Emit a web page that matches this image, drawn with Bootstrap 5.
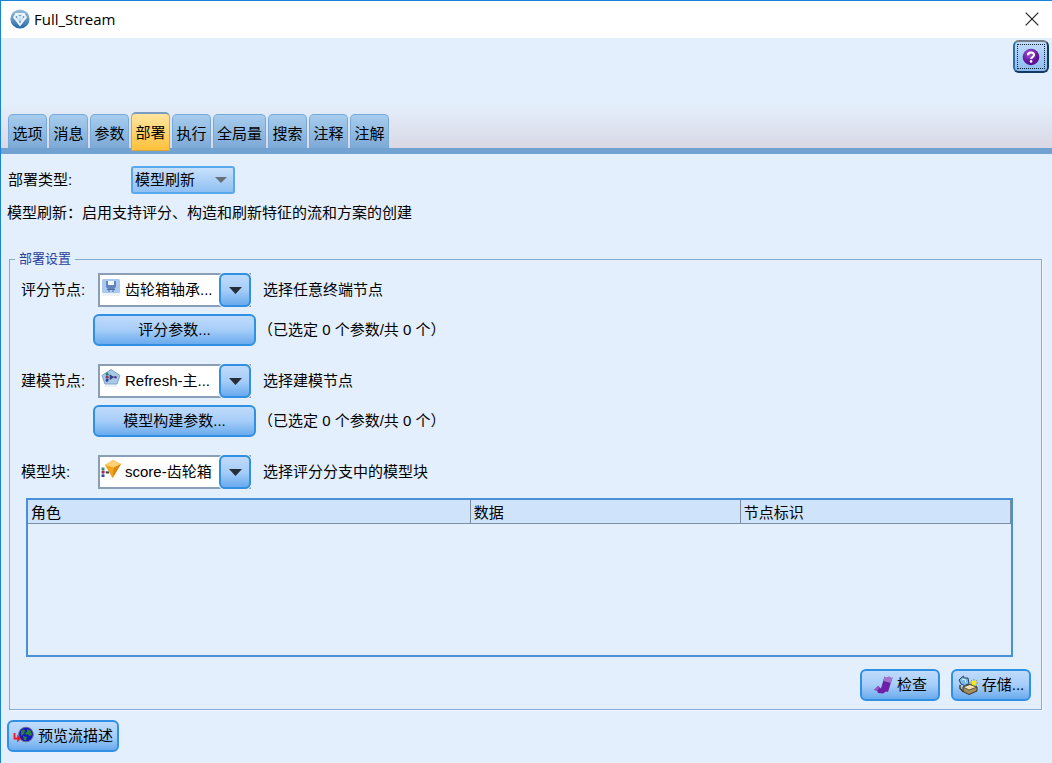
<!DOCTYPE html>
<html lang="zh-CN">
<head>
<meta charset="utf-8">
<meta name="viewport" content="width=device-width, initial-scale=1">
<title>Full_Stream</title>
<link href="https://cdn.jsdelivr.net/npm/bootstrap@5.3.0/dist/css/bootstrap.min.css" rel="stylesheet">
<style>
  body { font-family: "Liberation Sans", "Noto Sans CJK SC", sans-serif; font-size: 15px; line-height: 20px; color: #000; background: #e3effc; }
  .dialog { border: 1px solid #1883d7; border-right: 0; border-bottom: 0; }
  .title-bar { height: 37px; padding: 0 13px 2px 9px; background: #fff; font-family: "Open Sans", "Noto Sans CJK SC", sans-serif; }
  .close-btn { padding: 0; border: 0; background: none; line-height: 0; }
  .head { min-height: 116px; padding-left: 7px; border-bottom: 6px solid #72a2d2; background: linear-gradient(#e3effc 60%, #dad8e5) padding-box; }
  .help-btn { width: 36px; height: 33px; margin: 2px 3px 0 0; padding: 2px; border: 2px solid #15385f; border-top-color: #737d88; border-left-color: #2d6ea8; border-radius: 6px; background: linear-gradient(#c2dcfa, #8bbcf0); }
  .help-btn span { display: flex; width: 100%; height: 100%; align-items: center; justify-content: center; border: 1px dotted #123; }
  .tabs { gap: 2px; border: 0; }
  .tabs .nav-link { min-width: 39px; height: 34px; padding: 5px 3px 0; border: 1px solid #77a9dc; border-bottom: 0; border-radius: 5px 5px 0 0; margin: 0; color: #000; background: linear-gradient(#a7cdee, #7ca9d6); }
  .tabs .nav-link.active { height: 39px; margin-bottom: -3px; padding-top: 1px; border: 1px solid #d9a63a; border-top: 2px solid #7a9cc0; color: #000; background: linear-gradient(#ffe5a0, #ffc13c); }
  .glossy { padding: 0 4px; height: 32px; font-size: 15px; line-height: 20px; color: #000; border: 2px solid #2f90e4; border-radius: 6px; background: linear-gradient(#c0dbfb, #a6cdf8 50%, #6aabee); }
  .glossy:hover { color: #000; border-color: #1672c4; }
  .w-label { width: 77px; }
  .type-row { padding: 12px 0 0 7px; }
  .type-label { width: 123px; }
  .type-note { margin: 9px 0 0; padding-left: 6px; }
  .type-pick { position: relative; width: 104px; }
  .type-pick select { width: 100%; height: 28px; padding: 0 24px 0 2px; appearance: none; border: 2px solid #58a8ee; border-radius: 3px; background: linear-gradient(#c9e0fb, #8fc0f2); color: #000; }
  .type-pick svg { position: absolute; right: 8px; top: 11px; pointer-events: none; }
  .combo { position: relative; width: 153px; height: 34px; }
  .combo select { width: 100%; height: 34px; padding: 0 34px 0 25px; appearance: none; border: 2px solid #8a9fb5; background: #fff; color: #000; }
  .combo .pic { position: absolute; left: 3px; top: 4px; pointer-events: none; }
  .combo .drop { position: absolute; right: 0; top: 0; width: 32px; height: 34px; display: flex; align-items: center; justify-content: center; pointer-events: none; border: 2px solid #2f90e4; border-radius: 6px; background: linear-gradient(#c0dbfb, #a6cdf8 50%, #6aabee); box-shadow: 0 0 0 1px #e3effc; clip-path: inset(0 0 0 0); }
  .param-row { margin: 7px 0 18px 72px; gap: 2px; }
  .param-btn { width: 163px; }
  .settings { margin: 28px 10px 0 8px; padding: 6px 28px 8px 11px; border: 1px solid #86abd2; box-shadow: 1px 1px 0 #f4f9ff; }
  .settings legend { margin: 0 0 0 -6px; padding: 0 4px; font-size: 13px; line-height: 16px; color: #2c3e9c; }
  .grid-box { min-height: 159px; margin: 9px 0 12px 5px; border: 2px solid #4a90d6; }
  .grid-box table { table-layout: fixed; }
  .grid-box th { height: 23px; padding: 3px 3px 0; line-height: 18px; font-weight: 400; background: #cfe3fb; border-right: 1px solid #7d8b9b; border-bottom: 1px solid #7f90a6; }
  .actions { gap: 11px; margin-right: -18px; }
  .actions .glossy { width: 80px; }
  .preview-btn { margin: 10px 0 10px 6px; }
</style>
</head>
<body>
<div class="dialog min-vh-100">
  <header class="title-bar d-flex align-items-center justify-content-between">
    <div class="d-flex align-items-center gap-1">
      <svg width="20" height="20" viewBox="0 0 20 20" aria-hidden="true">
        <defs><linearGradient id="orb" x1="0" y1="0" x2="0" y2="1"><stop offset="0" stop-color="#9fbfdc"/><stop offset="1" stop-color="#2569a8"/></linearGradient></defs>
        <circle cx="10" cy="10" r="9.6" fill="url(#orb)"/>
        <path d="M5.500 4 14.500 4 17 8.500 10 17.500 3 8.500Z" fill="#e9f3fb"/>
        <path d="M6.500 8.500 10 12.500 13.500 8.500M10 8v4M8 6l2 1 2-1" fill="none" stroke="#9fc0dd" stroke-width=".8"/>
        <circle cx="6.500" cy="8" r=".9" fill="#5f95c6"/><circle cx="13.500" cy="8" r=".9" fill="#5f95c6"/><circle cx="10" cy="13" r=".9" fill="#5f95c6"/><circle cx="10" cy="6.500" r=".8" fill="#5f95c6"/>
      </svg>
      <span>Full_Stream</span>
    </div>
    <button class="close-btn" type="button" aria-label="关闭">
      <svg width="14" height="14" viewBox="0 0 14 14"><path d="M.7.7l12.600 12.600M13.300.7.7 13.300" stroke="#222" stroke-width="1.200"/></svg>
    </button>
  </header>

  <div class="head d-flex flex-column justify-content-between">
    <button class="help-btn align-self-end" type="button" aria-label="帮助">
      <span><svg width="18" height="18" viewBox="0 0 18 18">
        <defs><radialGradient id="plum" cx=".4" cy=".3" r=".8"><stop offset="0" stop-color="#a05ad6"/><stop offset=".6" stop-color="#6415a0"/><stop offset="1" stop-color="#4b0c84"/></radialGradient></defs>
        <circle cx="9" cy="9" r="8.300" fill="url(#plum)"/>
        <path d="M6 7.200C6 3.600 12.200 3.700 12 7c-.1 2-2.800 2-2.800 4" fill="none" stroke="#fff" stroke-width="2.100"/><circle cx="9.100" cy="13.400" r="1.300" fill="#fff"/>
      </svg></span>
    </button>
    <div class="nav nav-tabs tabs align-items-end" role="tablist">
      <button class="nav-link" type="button" role="tab">选项</button>
      <button class="nav-link" type="button" role="tab">消息</button>
      <button class="nav-link" type="button" role="tab">参数</button>
      <button class="nav-link active" type="button" role="tab" aria-selected="true">部署</button>
      <button class="nav-link" type="button" role="tab">执行</button>
      <button class="nav-link" type="button" role="tab">全局量</button>
      <button class="nav-link" type="button" role="tab">搜索</button>
      <button class="nav-link" type="button" role="tab">注释</button>
      <button class="nav-link" type="button" role="tab">注解</button>
    </div>
  </div>

  <main>
    <div class="type-row d-flex align-items-center">
      <label class="type-label" for="deployType">部署类型:</label>
      <div class="type-pick">
        <select id="deployType"><option>模型刷新</option></select>
        <svg width="12" height="6" viewBox="0 0 12 6"><path d="M0 0h12L6 6z" fill="#667078"/></svg>
      </div>
    </div>
    <p class="type-note">模型刷新：启用支持评分、构造和刷新特征的流和方案的创建</p>

    <fieldset class="settings">
      <legend class="float-none w-auto">部署设置</legend>

      <div class="d-flex align-items-center">
        <label class="w-label" for="scoreNode">评分节点:</label>
        <div class="combo">
          <select id="scoreNode"><option>齿轮箱轴承...</option></select>
          <svg class="pic" width="20" height="20" viewBox="0 0 20 20"><rect x="1" y="2" width="18" height="14" rx="1.500" fill="#a9c9ef"/><path d="M1 16h18v3H1z" fill="#edf2f9"/><path d="M5 4h10v6l-2 2H7l-2-2z" fill="#6384bd"/><path d="M7 4h6v4H7z" fill="#f3f7fc"/><path d="M6 12.500h8M7 14h2M11 14h2" stroke="#526ca5"/></svg>
          <span class="drop"><svg width="13" height="7" viewBox="0 0 13 7"><path d="M0 0h13L6.500 7z" fill="#262d36"/></svg></span>
        </div>
        <span class="ms-2 ps-1">选择任意终端节点</span>
      </div>
      <div class="param-row d-flex align-items-center">
        <button class="btn glossy param-btn" type="button">评分参数...</button>
        <span>（已选定 0 个参数/共 0 个）</span>
      </div>

      <div class="d-flex align-items-center">
        <label class="w-label" for="buildNode">建模节点:</label>
        <div class="combo">
          <select id="buildNode"><option>Refresh-主...</option></select>
          <svg class="pic" width="20" height="20" viewBox="0 0 20 20"><path d="M10 1.500 19 7.500 16 16H4L1 7.500Z" fill="#a9c8e6" stroke="#7ba4cd"/><path d="M4 17h12v2H4z" fill="#eef2f8"/><path d="M6 6l6 3-6 3zM7 9h8" fill="none" stroke="#55729b"/><circle cx="6" cy="6" r="1.400" fill="#238b72"/><circle cx="6" cy="9.200" r="1.400" fill="#8f326b"/><circle cx="6" cy="12.400" r="1.400" fill="#253ca0"/><path d="M9 6.500l4 2.700-4 2.700z" fill="#33457c"/><circle cx="14.500" cy="9.200" r="1.300" fill="#5e3b91"/></svg>
          <span class="drop"><svg width="13" height="7" viewBox="0 0 13 7"><path d="M0 0h13L6.500 7z" fill="#262d36"/></svg></span>
        </div>
        <span class="ms-2 ps-1">选择建模节点</span>
      </div>
      <div class="param-row d-flex align-items-center">
        <button class="btn glossy param-btn" type="button">模型构建参数...</button>
        <span>（已选定 0 个参数/共 0 个）</span>
      </div>

      <div class="d-flex align-items-center">
        <label class="w-label" for="modelNugget">模型块:</label>
        <div class="combo">
          <select id="modelNugget"><option>score-齿轮箱</option></select>
          <svg class="pic" width="20" height="20" viewBox="0 0 20 20"><path d="M2 9v8M2 13h5" stroke="#8996b5"/><path d="M.5 8.500h3v3h-3z" fill="#3d8c83"/><path d="M.5 12h3v2.500h-3z" fill="#a63261"/><path d="M.5 15.500h3V18h-3z" fill="#3444a0"/><path d="M4 6 12 1l8 4-8.500 14z" fill="#f2a51f"/><path d="M4 6 12 1l8 4-7 3.500z" fill="#ffd074"/><path d="M13 8.500 20 5l-8.500 14z" fill="#d9860d"/><path d="M5 13.500h3" stroke="#445" stroke-width="2"/></svg>
          <span class="drop"><svg width="13" height="7" viewBox="0 0 13 7"><path d="M0 0h13L6.500 7z" fill="#262d36"/></svg></span>
        </div>
        <span class="ms-2 ps-1">选择评分分支中的模型块</span>
      </div>

      <div class="grid-box">
        <table class="w-100">
          <colgroup><col style="width:45%"><col style="width:27.5%"><col style="width:27.5%"></colgroup>
          <thead><tr><th scope="col">角色</th><th scope="col">数据</th><th scope="col">节点标识</th></tr></thead>
          <tbody></tbody>
        </table>
      </div>

      <div class="actions d-flex justify-content-end">
        <button class="btn glossy d-flex align-items-center justify-content-center gap-1" type="button">
          <svg width="20" height="20" viewBox="0 0 20 20"><path d="M1 15 5 11 8 13.500 11.500 1.500 13 3 16 1.500 18 3 19.500 2.500 15 17 13 16.500 10 18.500 5 18 4 15.500Z" fill="#6e1fa8"/><path d="M11.500 1.500 13 3 16 1.500 18 3 19.500 2.500 18 8 10.500 6Z" fill="#a274cf"/><path d="M1 15 5 11 7 12.500 4.500 15.500Z" fill="#9654c4"/></svg>
          检查
        </button>
        <button class="btn glossy d-flex align-items-center justify-content-center gap-1" type="button">
          <svg class="flex-shrink-0" width="20" height="20" viewBox="0 0 20 20"><path d="M5 12 12 9.500 19 12V16L11 19.500 5 16.500Z" fill="#a88c5c" stroke="#36332c"/><path d="M5 12l7-2.500 7 2.500-8 3z" fill="#efe0b4" stroke="#4a412c" stroke-width=".8"/><path d="M3 3 5.500 1 6 3 10 3 11 9 6.500 10.500 3 9 1 5Z" fill="#74b9e9" stroke="#2d4257"/><path d="M4 5l3-1 1 4" fill="none" stroke="#e1f3ff"/><path d="M2 10v3.500L5.500 17" fill="none" stroke="#4a412c" stroke-width="1.500"/><path d="M16 4v8M12 8h8M13.200 5.200l5.600 5.600M18.800 5.200l-5.600 5.600" stroke="#91831e" stroke-width=".8"/><circle cx="16" cy="8" r="2.400" fill="#ffea19"/></svg>
          存储...
        </button>
      </div>
    </fieldset>

    <button class="btn glossy preview-btn d-flex align-items-center gap-1" type="button">
      <svg width="21" height="20" viewBox="0 0 21 20"><circle cx="13" cy="8.500" r="7.300" fill="#1714c5" stroke="#6b7088" stroke-width="1"/><path d="M8 5l3-2 1 2-1 3-3 2zM14 3l4 2 1 4-3 1-1-2-2 1-1-2 2-1zM10 10l4 1-1 3.500-2-.5z" fill="#26852f"/><path d="M1.500 7v5.500h3" fill="none" stroke="#e81922" stroke-width="1.800"/><path d="M4.200 8.500v8L8 12.500z" fill="#e81922"/></svg>
      预览流描述
    </button>
  </main>
</div>
<script src="https://cdn.jsdelivr.net/npm/bootstrap@5.3.0/dist/js/bootstrap.bundle.min.js"></script>
</body>
</html>
